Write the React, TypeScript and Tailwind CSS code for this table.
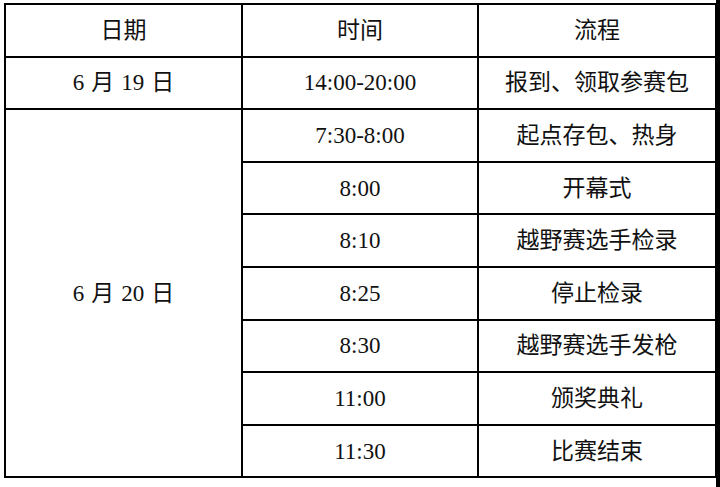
import React from "react";

const rows: [string, string][] = [
  ["7:30-8:00", "起点存包、热身"],
  ["8:00", "开幕式"],
  ["8:10", "越野赛选手检录"],
  ["8:25", "停止检录"],
  ["8:30", "越野赛选手发枪"],
  ["11:00", "颁奖典礼"],
  ["11:30", "比赛结束"],
];

function DateText({ d }: { d: string }) {
  return (
    <span className="inline-flex items-baseline gap-[7px]">
      <span>6</span>
      <span>月</span>
      <span>{d}</span>
      <span>日</span>
    </span>
  );
}

export default function App() {
  const cell = "border-2 border-black text-center align-middle p-0";
  return (
    <div
      className="flex w-[720px] h-[487px] bg-white text-[#111] text-[23px] leading-none"
      style={{ fontFamily: '"Liberation Serif", "Noto Sans CJK SC", serif' }}
    >
      <div className="w-[716px] pl-[4px] pt-[3px]">
        <table className="table-fixed border-collapse w-[711px]">
          <colgroup>
            <col className="w-[237px]" />
            <col className="w-[236px]" />
            <col className="w-[238px]" />
          </colgroup>
          <tbody>
            <tr className="h-[52.6px]">
              <td className={cell}>日期</td>
              <td className={cell}>时间</td>
              <td className={cell}>流程</td>
            </tr>
            <tr className="h-[52.6px]">
              <td className={cell}>
                <DateText d="19" />
              </td>
              <td className={cell}>14:00-20:00</td>
              <td className={cell}>报到、领取参赛包</td>
            </tr>
            {rows.map(([t, p], i) => (
              <tr key={i} className="h-[52.6px]">
                {i === 0 && (
                  <td className={cell} rowSpan={7}>
                    <DateText d="20" />
                  </td>
                )}
                <td className={cell}>{t}</td>
                <td className={cell}>{p}</td>
              </tr>
            ))}
          </tbody>
        </table>
      </div>
      <div className="w-[4px] h-full bg-black" />
    </div>
  );
}
